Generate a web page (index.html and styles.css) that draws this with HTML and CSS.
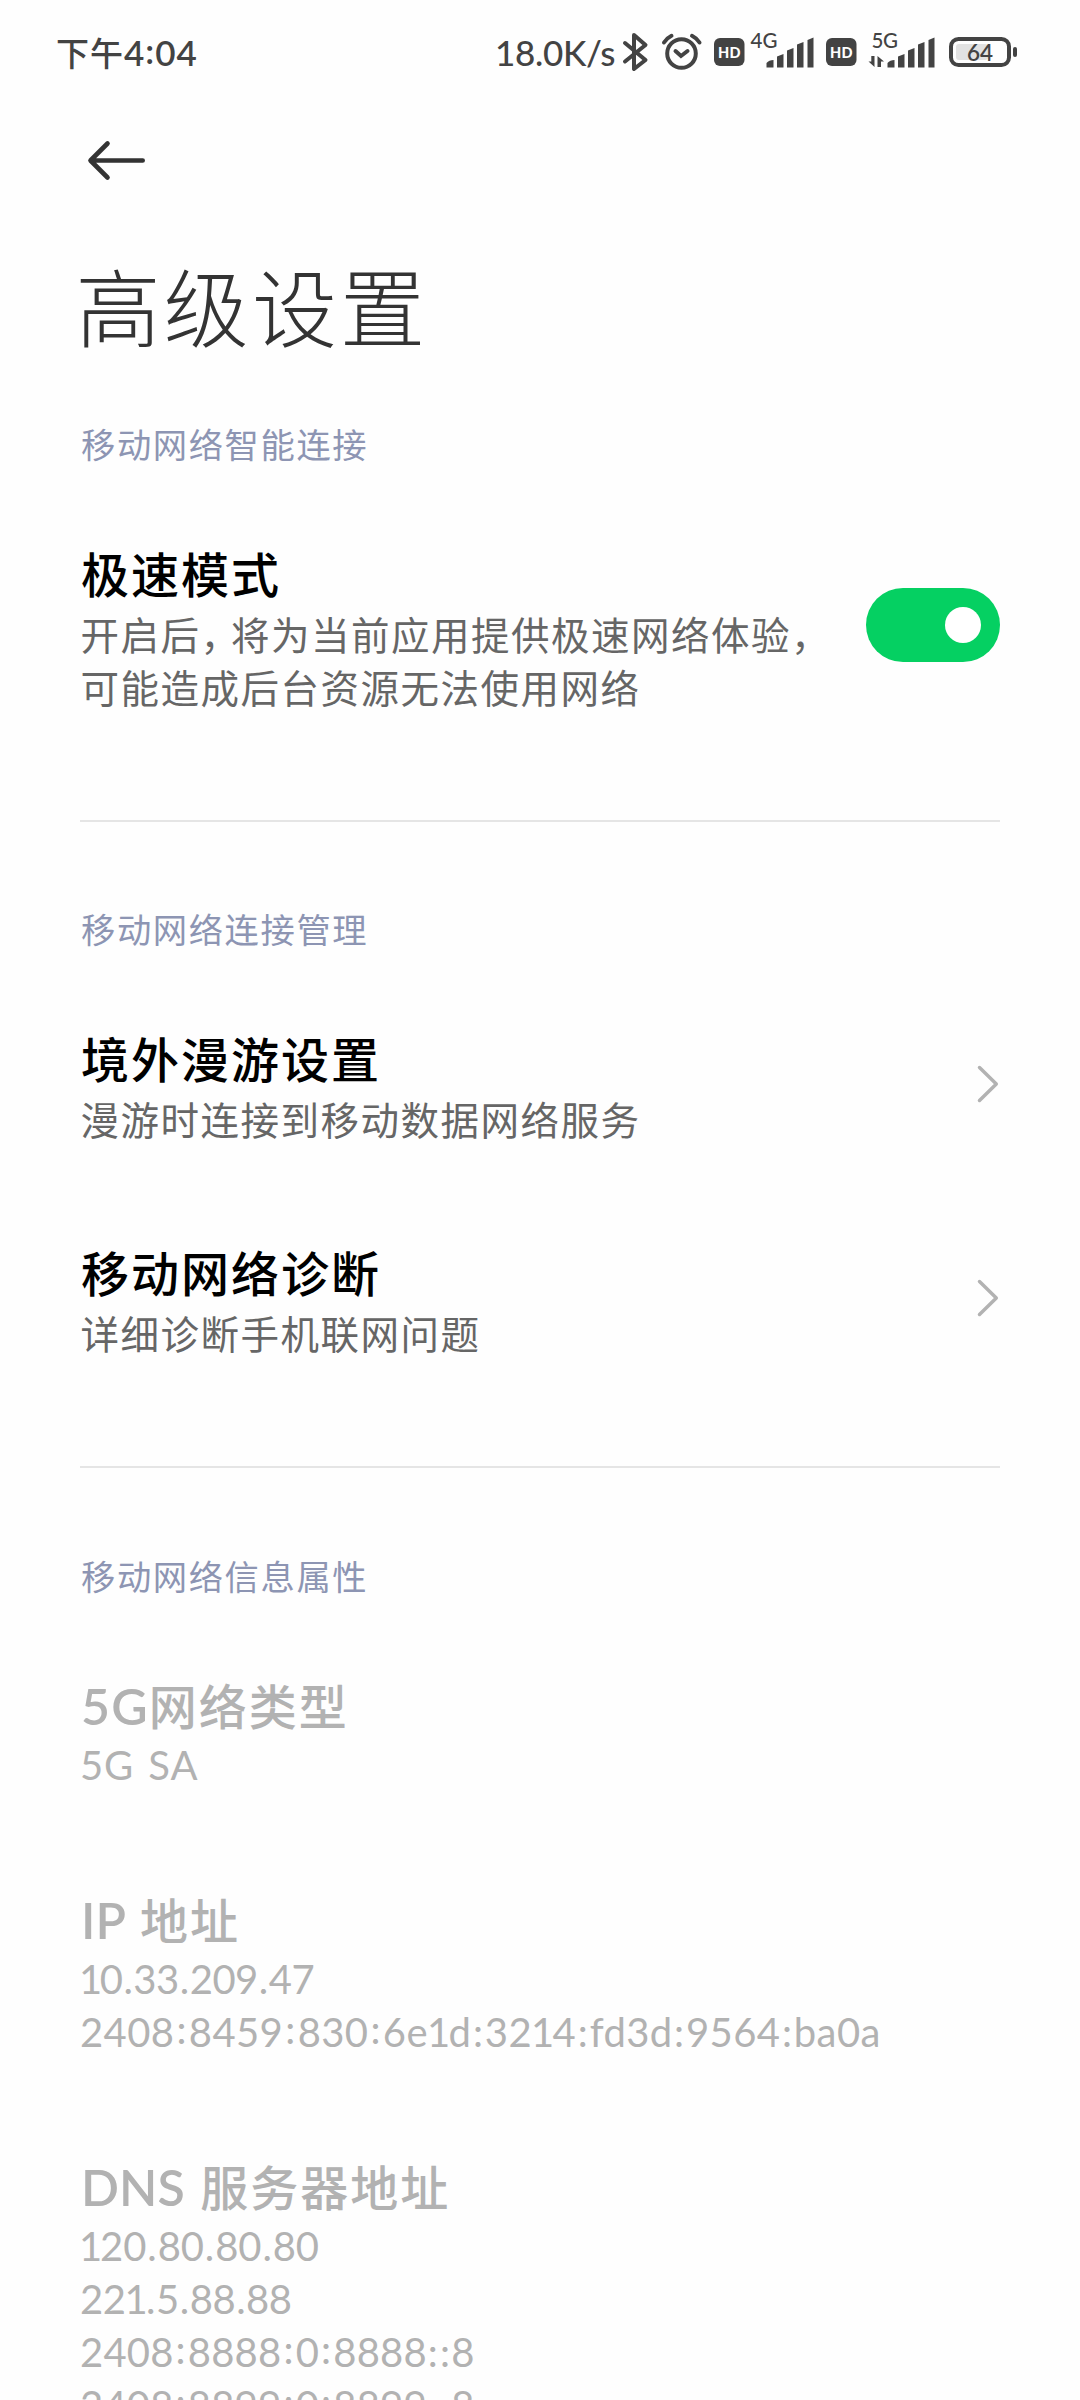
FILE: index.html
```html
<!DOCTYPE html>
<html lang="zh-CN">
<head>
<meta charset="utf-8">
<title>高级设置</title>
<link rel="stylesheet" href="styles.css">
</head>
<body>
<div class="screen">
  <div class="status">
    <div class="time">下午<span class="clock">4<span class="raised">:</span>04</span></div>
    <div class="speed">18.0K/s</div>
    <svg class="status-icons" width="400" height="50" viewBox="620 28 400 50">
      <path class="bt" d="M625 43L645.500 60L634 69V35L645.500 45L625 61.500"/>
      <g class="alarm">
        <circle cx="681.500" cy="53.500" r="14.300"/>
        <path d="M675.500 51L681 56L687.500 51M664 42.500Q667 38 671.500 35.800M692 35.800Q696.500 38 699.500 42.500"/>
      </g>
      <rect class="fill" x="714" y="38" width="30.500" height="28" rx="6"/>
      <text class="hd" x="718" y="57.500" textLength="22.500">HD</text>
      <text class="net" x="750.500" y="47.700" textLength="27">4G</text>
      <path class="fill" d="M766.500 67.500V63Q769 60 773.500 60V67.500ZM777 67.500V56.500L783.500 54V67.500ZM787 67.500V50.500L793.500 48V67.500ZM797 67.500V44.500L803.500 42V67.500ZM807.500 67.500V40L813.500 37.500V67.500Z"/>
      <rect class="fill" x="826" y="38" width="30.500" height="28" rx="6"/>
      <text class="hd" x="830" y="57.500" textLength="22.500">HD</text>
      <text class="net" x="871.500" y="47.700" textLength="26.500">5G</text>
      <path class="fill" d="M871.300 56H874.500V67L868.500 61.500H871.300ZM877.500 56L884 61.500H881V67H877.500Z"/>
      <path class="fill" d="M887.500 67.500V63Q890 60 894.500 60V67.500ZM898 67.500V56.500L904.500 54V67.500ZM908 67.500V50.500L914.500 48V67.500ZM918 67.500V44.500L924.500 42V67.500ZM928.500 67.500V40L934.500 37.500V67.500Z"/>
      <rect class="level" x="956" y="44" width="32" height="16" rx="3"/>
      <rect class="shell" x="951" y="39" width="58" height="26" rx="7.500"/>
      <rect class="fill" x="1013" y="47" width="4" height="10" rx="2"/>
      <text class="pct" x="967" y="60.700" textLength="26">64</text>
    </svg>
  </div>
  <div class="nav">
    <svg width="66" height="44" viewBox="0 0 66 44"><path class="back" d="M58.700 22.500H7M23.500 5.500L6.500 22.500L23.500 39.500"/></svg>
  </div>
  <h1 class="heading">高级设置</h1>

  <section class="group">
    <h2 class="label">移动网络智能连接</h2>
    <div class="item">
      <div class="text">
        <div class="title">极速模式</div>
        <div class="desc">开启后<span class="comma">，</span>将为当前应用提供极速网络体验<span class="comma">，</span></div>
        <div class="desc">可能造成后台资源无法使用网络</div>
      </div>
      <div class="toggle"><div class="knob"></div></div>
    </div>
  </section>

  <section class="group ruled">
    <h2 class="label">移动网络连接管理</h2>
    <div class="item">
      <div class="text">
        <div class="title">境外漫游设置</div>
        <div class="desc">漫游时连接到移动数据网络服务</div>
      </div>
      <svg class="chevron" width="24" height="40" viewBox="0 0 24 40"><path d="M3.500 3.500L20.300 20L3.500 36.500"/></svg>
    </div>
    <div class="item">
      <div class="text">
        <div class="title">移动网络诊断</div>
        <div class="desc">详细诊断手机联网问题</div>
      </div>
      <svg class="chevron" width="24" height="40" viewBox="0 0 24 40"><path d="M3.500 3.500L20.300 20L3.500 36.500"/></svg>
    </div>
  </section>

  <section class="group ruled disabled">
    <h2 class="label">移动网络信息属性</h2>
    <div class="item">
      <div class="text">
        <div class="title"><span class="latin wide">5G</span>网络类型</div>
        <div class="desc latin type">5G SA</div>
      </div>
    </div>
    <div class="item">
      <div class="text">
        <div class="title"><span class="latin">IP </span>地址</div>
        <div class="desc latin tight"><span class="one">1</span>0<i>.</i>33<i>.</i>209<i>.</i>47</div>
        <div class="desc latin long">2408<b>:</b>8459<b>:</b>830<b>:</b>6e<span class="one">1</span>d<u>:</u>32<span class="one">1</span>4<u>:</u>fd3d<u>:</u>9564<u>:</u>ba0a</div>
      </div>
    </div>
    <div class="item">
      <div class="text">
        <div class="title"><span class="latin">DNS </span>服务器地址</div>
        <div class="desc latin snug"><span class="one">1</span>20<i>.</i>80<i>.</i>80<i>.</i>80</div>
        <div class="desc latin tight">22<span class="one">1</span><i>.</i>5<i>.</i>88<i>.</i>88</div>
        <div class="desc latin">2408<b>:</b>8888<b>:</b>0<b>:</b>8888<i>:</i><i>:</i>8</div>
        <div class="desc latin">2408<b>:</b>8899<b>:</b>0<b>:</b>8899<i>:</i><i>:</i>8</div>
      </div>
    </div>
  </section>
</div>
</body>
</html>
```
FILE: styles.css
```css
* { box-sizing: border-box; }
html, body { margin: 0; height: 2400px; overflow: hidden; background: #fefefe; }
body { font-family: "Noto Sans CJK SC", sans-serif; color: #000; }
.screen { width: 1080px; height: 2400px; overflow: hidden; }
.status { display: flex; align-items: center; height: 50px; margin-top: 28px; padding-left: 56px; color: #434343; line-height: 50px; }
.time { width: 439px; height: 52px; font-size: 33px; font-weight: 500; letter-spacing: 1px; white-space: nowrap; }
.clock, .speed { font-family: Lato, sans-serif; font-size: 35px; font-weight: 600; }
.raised { display: inline-block; line-height: 1; transform: translateY(-2px); }
.speed { width: 125px; height: 52px; letter-spacing: -.3px; font-weight: 500; white-space: nowrap; }
.status-icons { flex: none; }
.fill { fill: #434343; }
.bt { fill: none; stroke: #434343; stroke-width: 4; stroke-linejoin: round; stroke-linecap: round; }
.alarm { fill: none; stroke: #434343; stroke-width: 4; stroke-linecap: round; }
.hd { font: 900 14.5px Lato, sans-serif; fill: #fff; }
.net { font: 500 20.5px Lato, sans-serif; fill: #434343; }
.pct { font: 600 22.5px Lato, sans-serif; fill: #434343; }
.shell { fill: none; stroke: #434343; stroke-width: 4; }
.level { fill: #e2e2e2; }
.nav { display: flex; height: 161px; padding: 60px 0 0 84px; }
.back { fill: none; stroke: #333; stroke-width: 4.6; stroke-linecap: round; stroke-linejoin: round; }
.heading { margin: 0 0 0 75.5px; height: 130px; line-height: 130px; font-size: 85px; font-weight: 300; letter-spacing: 3.2px; color: #333; }
.group { padding: 49.5px 80px 0; }
.label { margin: 0 0 26px 1px; height: 48px; line-height: 48px; font-size: 34.3px; font-weight: 400; letter-spacing: 1.6px; color: #8d95b3; }
.ruled { padding-top: 60px; }
.ruled::before { content: ""; display: block; height: 2px; margin-bottom: 82.5px; background: #e5e5e5; }
.item { display: flex; justify-content: space-between; align-items: center; padding: 45px 0 47px; }
.title { height: 69px; line-height: 68px; padding-left: 1px; font-size: 48px; font-weight: 500; letter-spacing: 2px; white-space: nowrap; }
.desc { height: 53px; line-height: 53px; padding-left: .5px; font-size: 38.5px; letter-spacing: 1.5px; color: #666; white-space: nowrap; }
.comma { letter-spacing: -8px; }
.latin { font-family: Lato, sans-serif; }
.title .latin { font-size: 50px; font-weight: 600; letter-spacing: 0; word-spacing: 3px; white-space: pre; }
.title .wide { letter-spacing: 1.2px; }
.desc.latin { padding-left: 0; font-size: 40px; letter-spacing: .2px; }
.desc.type { letter-spacing: .9px; word-spacing: 3px; }
.desc.tight { letter-spacing: -.5px; }
.desc.snug { letter-spacing: -.1px; }
.desc.long { letter-spacing: .4px; }
.one { margin: 0 -2px 0 -1px; }
.desc i { font-style: normal; margin: 0 1px; }
.desc u { text-decoration: none; margin: 0 1.5px; }
.desc b { display: inline-block; line-height: 1; font-weight: 400; margin: 0 2px; transform: translateY(-3px); }
.disabled .title, .disabled .desc { color: #b2b2b2; }
.toggle { flex: none; display: flex; align-items: center; justify-content: flex-end; width: 134px; height: 74px; padding-right: 19px; border-radius: 37px; background: #05d062; }
.knob { width: 36px; height: 36px; border-radius: 50%; background: #fff; }
.chevron { flex: none; fill: none; stroke: #b2b2b2; stroke-width: 3.5; stroke-linecap: round; stroke-linejoin: round; }
```
